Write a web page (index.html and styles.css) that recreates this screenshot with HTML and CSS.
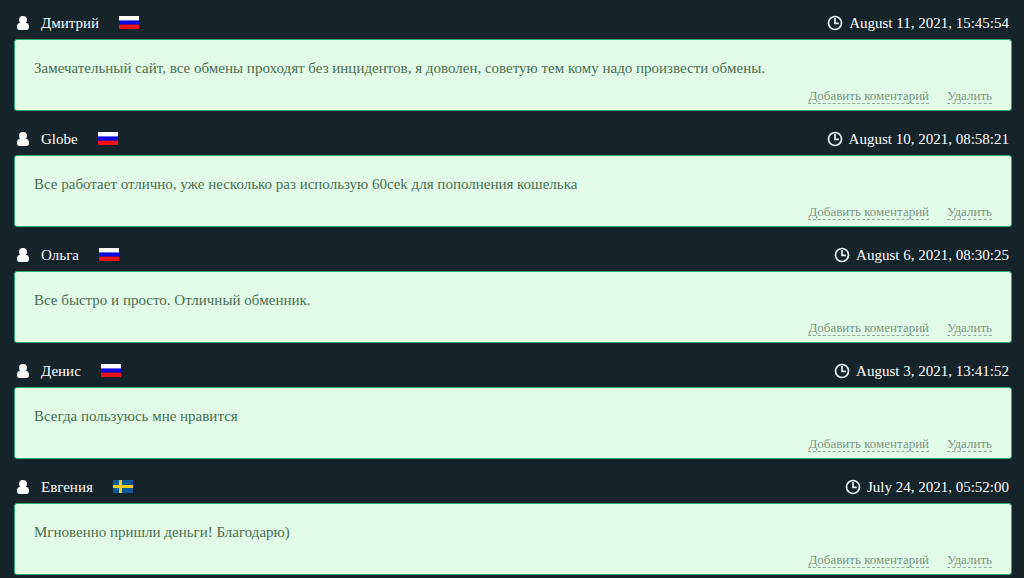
FILE: index.html
```html
<!DOCTYPE html>
<html lang="ru">
<head>
    <meta charset="UTF-8">
    <meta name="viewport" content="width=device-width, initial-scale=1.0">
    <title>Отзывы</title>
    <link rel="stylesheet" href="styles.css">
</head>
<body>

    <!-- Shared icons -->
    <svg class="icon_defs" aria-hidden="true">
        <symbol id="user" viewBox="0 0 12 14">
            <path d="M6 0a4 4 0 0 1 4 4c0 1.100-.4 2.100-1.100 2.800C11.200 6.900 12 8.700 12 11.300 12 13 11 14 9.500 14h-7C1 14 0 13 0 11.300 0 8.700.8 6.900 3.100 6.800 2.400 6.100 2 5.100 2 4a4 4 0 0 1 4-4z" fill="#fff"/>
        </symbol>
        <symbol id="clock" viewBox="0 0 16 16">
            <circle cx="8" cy="8" r="6.500" fill="none" stroke="#e6f5f5" stroke-width="1.700"/>
            <path d="M8 3v5.400h3.800" fill="none" stroke="#e6f5f5" stroke-width="1.700"/>
        </symbol>
        <symbol id="flag_ru" viewBox="0 0 20 13" preserveAspectRatio="none">
            <path d="M0 0h20v5H0z" fill="#fff"/>
            <path d="M0 4.400h20v4.400H0z" fill="#0a0ae0"/>
            <path d="M0 8.600h20V13H0z" fill="#f01018"/>
        </symbol>
        <symbol id="flag_se" viewBox="0 0 20 13" preserveAspectRatio="none">
            <path d="M0 0h20v13H0z" fill="#0b5a96"/>
            <path d="M6 0h3v13H6zM0 5h20v3H0z" fill="#f5cb1c"/>
        </symbol>
    </svg>

    <main class="reviews">
        <article class="review">
            <header class="review_head">
                <svg class="user"><use href="#user"/></svg>
                <span class="name">Дмитрий</span>
                <svg class="flag"><use href="#flag_ru"/></svg>
                <svg class="clock"><use href="#clock"/></svg>
                <time datetime="2021-08-11T15:45:54">August 11, 2021, 15:45:54</time>
            </header>
            <div class="review_box">
                <p>Замечательный сайт, все обмены проходят без инцидентов, я доволен, советую тем кому надо произвести обмены.</p>
                <div class="links">
                    <a href="#">Добавить коментарий</a>
                    <a href="#">Удалить</a>
                </div>
            </div>
        </article>

        <article class="review">
            <header class="review_head">
                <svg class="user"><use href="#user"/></svg>
                <span class="name">Globe</span>
                <svg class="flag"><use href="#flag_ru"/></svg>
                <svg class="clock"><use href="#clock"/></svg>
                <time datetime="2021-08-10T08:58:21">August 10, 2021, 08:58:21</time>
            </header>
            <div class="review_box">
                <p>Все работает отлично, уже несколько раз использую 60cek для пополнения кошелька</p>
                <div class="links">
                    <a href="#">Добавить коментарий</a>
                    <a href="#">Удалить</a>
                </div>
            </div>
        </article>

        <article class="review">
            <header class="review_head">
                <svg class="user"><use href="#user"/></svg>
                <span class="name">Ольга</span>
                <svg class="flag"><use href="#flag_ru"/></svg>
                <svg class="clock"><use href="#clock"/></svg>
                <time datetime="2021-08-06T08:30:25">August 6, 2021, 08:30:25</time>
            </header>
            <div class="review_box">
                <p>Все быстро и просто. Отличный обменник.</p>
                <div class="links">
                    <a href="#">Добавить коментарий</a>
                    <a href="#">Удалить</a>
                </div>
            </div>
        </article>

        <article class="review">
            <header class="review_head">
                <svg class="user"><use href="#user"/></svg>
                <span class="name">Денис</span>
                <svg class="flag"><use href="#flag_ru"/></svg>
                <svg class="clock"><use href="#clock"/></svg>
                <time datetime="2021-08-03T13:41:52">August 3, 2021, 13:41:52</time>
            </header>
            <div class="review_box">
                <p>Всегда пользуюсь мне нравится</p>
                <div class="links">
                    <a href="#">Добавить коментарий</a>
                    <a href="#">Удалить</a>
                </div>
            </div>
        </article>

        <article class="review">
            <header class="review_head">
                <svg class="user"><use href="#user"/></svg>
                <span class="name">Евгения</span>
                <svg class="flag"><use href="#flag_se"/></svg>
                <svg class="clock"><use href="#clock"/></svg>
                <time datetime="2021-07-24T05:52:00">July 24, 2021, 05:52:00</time>
            </header>
            <div class="review_box">
                <p>Мгновенно пришли деньги! Благодарю)</p>
                <div class="links">
                    <a href="#">Добавить коментарий</a>
                    <a href="#">Удалить</a>
                </div>
            </div>
        </article>
    </main>

</body>
</html>
```
FILE: styles.css
```css
body {
    margin: 0;
    background-color: #15232a;
    font-family: "Liberation Serif", "Times New Roman", serif;
    font-size: 15px;
    line-height: 18px;
}
.icon_defs {
    display: none;
}
.reviews {
    padding: 8px 12px 0 14px;
}
.review {
    margin-bottom: 13px;
}
.review_head {
    display: flex;
    align-items: center;
    height: 30px;
    margin-bottom: 1px;
    padding: 0 3px;
    color: #fff;
}
.user {
    width: 12px;
    height: 14px;
    margin-right: 12px;
}
.flag {
    width: 20px;
    height: 13px;
    margin: 0 auto 2px 20px;
}
.clock {
    width: 16px;
    height: 16px;
    margin-right: 6px;
}
.review_box {
    padding: 19px 19px 6px;
    border: 1px solid #2fa77a;
    border-radius: 3px;
    background-color: #e2fbe6;
    color: #4a6e52;
}
.review_box p {
    margin: 0 0 12px;
}
.links {
    display: flex;
    justify-content: flex-end;
    gap: 18px;
    font-size: 13px;
    line-height: 14px;
}
.links a {
    border-bottom: 1px dashed #93a79b;
    color: #7c9487;
    text-decoration: none;
}
```
